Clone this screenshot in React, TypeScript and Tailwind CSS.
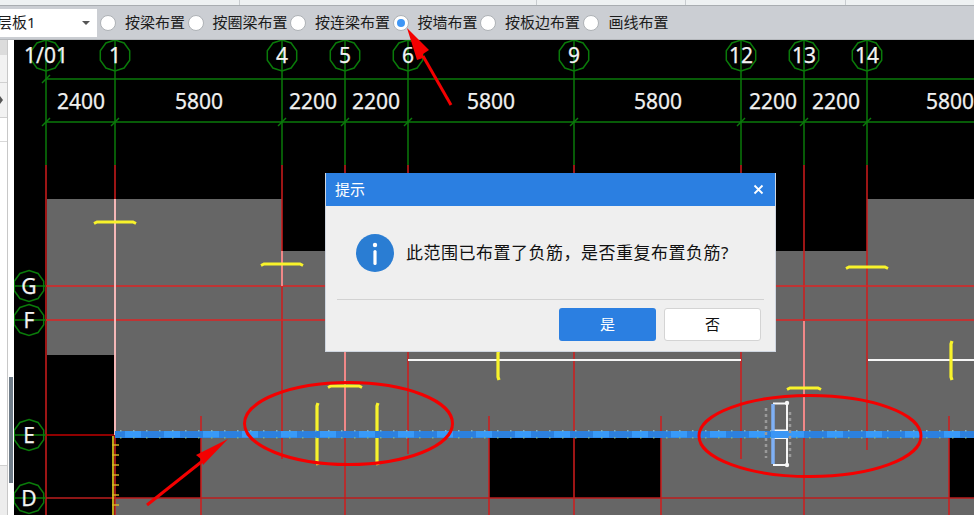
const font = { fontFamily: '"Noto Sans", "Noto Sans CJK SC", sans-serif' };

const opts = ['按梁布置', '按圈梁布置', '按连梁布置', '按墙布置', '按板边布置', '画线布置'];

const axes: [number, string][] = [
  [46, '1/01'], [115, '1'], [282, '4'], [345, '5'], [408, '6'],
  [574, '9'], [741, '12'], [804, '13'], [867, '14'],
];
const dims: [number, string][] = [
  [81, '2400'], [199, '5800'], [313, '2200'], [376, '2200'], [491, '5800'],
  [658, '5800'], [773, '2200'], [836, '2200'], [950, '5800'],
];
const rows: [number, string][] = [[286, 'G'], [320, 'F'], [435, 'E'], [498, 'D']];

function poly(cx: number, cy: number, r: number) {
  const pts: string[] = [];
  for (let i = 0; i < 10; i++) {
    const a = (i * Math.PI) / 5 - Math.PI / 2;
    pts.push(`${(cx + r * Math.cos(a)).toFixed(1)},${(cy + r * Math.sin(a)).toFixed(1)}`);
  }
  return pts.join(' ');
}

const red = '#d01c1c';
const green = '#0a7a0a';

// x, y1, y2
const redV: [number, number, number][] = [
  [46, 165, 515], [115, 165, 199], [115, 435, 515], [282, 165, 459], [345, 165, 515], [408, 165, 454],
  [574, 165, 515], [741, 165, 459], [804, 165, 515], [867, 165, 450],
  [201, 416, 515], [489, 416, 515], [661, 416, 515], [949, 416, 515],
];
const pink: [number, number, number][] = [
  [115, 199, 435], [282, 251, 286], [345, 321, 435], [804, 321, 435],
];
const yellowH: [number, number, number][] = [
  [94, 136, 222], [261, 303, 264], [328, 362, 386], [787, 821, 388], [846, 888, 267],
];
const yellowV: [number, number, number][] = [
  [317, 403, 465], [377, 403, 465], [498, 350, 380], [951, 341, 380],
];

function Drawing() {
  const ticks: number[] = [];
  for (let x = 120; x < 974; x += 13) ticks.push(x);
  const glow: number[] = [];
  for (let x = 125; x < 974; x += 39) glow.push(x);
  const ruler: number[] = [];
  for (let y = 445; y < 515; y += 10) ruler.push(y);
  return (
    <svg className="block h-full w-full" viewBox="14 40 960 475" style={font}>
      <rect x="14" y="40" width="960" height="475" fill="#000" />
      {/* slab areas */}
      <path
        d="M47 199H282V251H804V251H867V199H974V437H949V498H661V437H489V498H201V437H115V498H974V515H115V355H47Z"
        fill="#666"
      />
      {/* dimension lines */}
      <line x1="46" x2="974" y1="79" y2="79" stroke={green} strokeWidth="1.6" />
      <line x1="46" x2="974" y1="122" y2="122" stroke={green} strokeWidth="1.6" />
      {axes.map(([x, label]) => (
        <g key={label}>
          <line x1={x} x2={x} y1="40" y2="165" stroke={green} strokeWidth="1.5" />
          <line x1={x - 4} x2={x + 4} y1="126" y2="118" stroke={green} strokeWidth="1.5" />
          <polygon points={poly(x, 55.5, 15.5)} fill="none" stroke={green} strokeWidth="1.5" />
          <text x={x} y="63" fill="#f2f2f2" fontSize="21" textAnchor="middle" stroke="#f2f2f2" strokeWidth="0.25">{label}</text>
        </g>
      ))}
      <line x1="42" x2="50" y1="83" y2="75" stroke={green} strokeWidth="1.5" />
      {dims.map(([x, label], i) => (
        <text key={i} x={x} y="109" fill="#f0f0f0" fontSize="21" textAnchor="middle" stroke="#f0f0f0" strokeWidth="0.25">{label}</text>
      ))}
      {/* red grid */}
      {redV.map(([x, a, b], i) => (
        <line key={i} x1={x} x2={x} y1={a} y2={b} stroke={red} strokeWidth="1.5" />
      ))}
      <line x1="46" x2="974" y1="286" y2="286" stroke="#de2424" strokeWidth="1.6" />
      <line x1="46" x2="974" y1="320" y2="320" stroke="#de2424" strokeWidth="1.6" />
      <line x1="46" x2="115" y1="435" y2="435" stroke="#c00000" strokeWidth="1.6" />
      <line x1="46" x2="974" y1="498" y2="498" stroke="#bd1e1e" strokeWidth="1.6" />
      {pink.map(([x, a, b], i) => (
        <line key={i} x1={x} x2={x} y1={a} y2={b} stroke={i === 0 ? '#f5b8b8' : '#f08888'} strokeWidth="2" />
      ))}
      {/* row bubbles */}
      {rows.map(([y, label]) => (
        <g key={label}>
          <line x1="14" x2="46" y1={y} y2={y} stroke={green} strokeWidth="1.5" />
          <polygon points={poly(29, y, 15.5)} fill="none" stroke={green} strokeWidth="1.5" />
          <text x="29" y={y + 8} fill="#f2f2f2" fontSize="21" textAnchor="middle" stroke="#f2f2f2" strokeWidth="0.25">{label}</text>
        </g>
      ))}
      {/* white edges */}
      <line x1="408" x2="741" y1="360" y2="360" stroke="#f6f6f6" strokeWidth="2.2" />
      <line x1="868" x2="974" y1="360" y2="360" stroke="#f6f6f6" strokeWidth="2.2" />
      {/* yellow bars */}
      {yellowH.map(([a, b, y], i) => (
        <polyline key={i} points={`${a},${y + 1.5} ${a + 3},${y} ${b - 3},${y} ${b},${y + 1.5}`} fill="none" stroke="#f8f32b" strokeWidth="3" />
      ))}
      {yellowV.map(([x, a, b], i) => (
        <polyline key={i} points={`${x + 1},${a} ${x},${a + 3} ${x},${b - 3} ${x + 1},${b}`} fill="none" stroke="#f8f32b" strokeWidth="3.2" />
      ))}
      {/* ruler */}
      <line x1="113" x2="113" y1="436" y2="515" stroke="#e8d020" strokeWidth="1.6" />
      {ruler.map((y) => (
        <line key={y} x1="112" x2="119" y1={y} y2={y} stroke="#d8b820" strokeWidth="1.4" />
      ))}
      {/* blue beam */}
      <rect x="115" y="431" width="859" height="7" fill="#2c80de" />
      {glow.map((x) => (
        <rect key={x} x={x} y="431" width="16" height="6.5" fill="#389af8" />
      ))}
      {ticks.map((x) => (
        <g key={x}>
          <rect x={x} y="430" width="1.5" height="1.5" fill="#7fb4c4" />
          <rect x={x} y="437" width="1.5" height="1.5" fill="#6fae9a" />
        </g>
      ))}
      {/* opening detail */}
      <path d="M773 403.5H787V430.5H773" fill="none" stroke="#f6f6f6" strokeWidth="2" />
      <path d="M773 438H787V465H773" fill="none" stroke="#f6f6f6" strokeWidth="2" />
      <line x1="773" x2="773" y1="404" y2="431" stroke="#7fb0f5" strokeWidth="3.5" />
      <line x1="773" x2="773" y1="437" y2="464" stroke="#7fb0f5" strokeWidth="3.5" />
      <rect x="771" y="431" width="19" height="7" fill="#3a96f5" />
      <line x1="766" x2="766" y1="408" y2="458" stroke="#9a9a9a" strokeWidth="2.5" strokeDasharray="3 3" />
      <line x1="790" x2="790" y1="412" y2="458" stroke="#9a9a9a" strokeWidth="2.5" strokeDasharray="3 3" />
      <circle cx="787" cy="403" r="2.2" fill="#f6f6f6" />
      <circle cx="787" cy="465" r="2.2" fill="#f6f6f6" />
      {/* ellipses */}
      <ellipse cx="348.5" cy="423.5" rx="104" ry="41" fill="none" stroke="#f40000" strokeWidth="3" />
      <ellipse cx="810" cy="436" rx="111" ry="40.5" fill="none" stroke="#f40000" strokeWidth="3" />
    </svg>
  );
}

function Arrows() {
  return (
    <svg className="pointer-events-none absolute left-0 top-0" width="974" height="515" viewBox="0 0 974 515">
      <line x1="451" y1="105" x2="423" y2="56" stroke="#f40000" strokeWidth="3" />
      <polygon points="407,28 429,50 423,54 423,58 417,60" fill="#f40000" />
      <line x1="147" y1="505" x2="205" y2="459" stroke="#f40000" strokeWidth="3" />
      <polygon points="228,439 203,465 201,459 196,455" fill="#f40000" />
    </svg>
  );
}

function Radio({ checked }: { checked?: boolean }) {
  return (
    <span className="flex h-4 w-4 shrink-0 items-center justify-center rounded-full border border-[#aeb2b6] bg-white">
      {checked && <span className="h-2 w-2 rounded-full bg-[#3f96f5]" />}
    </span>
  );
}

export default function App() {
  return (
    <div className="relative flex h-[515px] w-[974px] flex-col overflow-hidden bg-white" style={font}>
      {/* top strip */}
      <div className="flex h-[6px] shrink-0 border-b border-[#a9adb1] bg-[#eef1f2]">
        <div className="ml-[239px] h-full w-px bg-[#c9cdd0]" />
        <div className="ml-[296px] h-full w-px bg-[#c9cdd0]" />
        <div className="ml-[148px] h-full w-px bg-[#c9cdd0]" />
        <div className="ml-[159px] h-full w-px bg-[#c9cdd0]" />
      </div>
      {/* toolbar */}
      <div className="flex h-[34px] shrink-0 items-center border-b border-[#b5b8bc] bg-[#cbced3] text-[15px] text-[#1c1c1c]">
        <div className="flex h-[28px] w-[97px] shrink-0 items-center justify-between overflow-hidden bg-white pr-[7px]">
          <span className="-ml-[3px] whitespace-nowrap text-[15px]">层板1</span>
          <span className="h-0 w-0 border-x-[4px] border-t-[4px] border-x-transparent border-t-[#555]" />
        </div>
        <div className="ml-[3px] flex items-center gap-[2.5px]">
          {opts.map((t, i) => (
            <div key={t} className="flex items-center">
              <Radio checked={i === 3} />
              <span className={i === 5 ? 'ml-[10px] whitespace-nowrap leading-none' : 'ml-[9px] whitespace-nowrap leading-none'}>{t}</span>
            </div>
          ))}
        </div>
      </div>
      {/* body */}
      <div className="flex min-h-0 flex-1">
        <aside className="flex w-[14px] shrink-0 bg-white">
          <div className="flex w-[8px] flex-col border-r border-[#c8c8c8] bg-white">
            <div className="h-[15px] bg-[#dcdcdc]" />
            <div className="h-[28px] border-b border-[#d0d0d0] bg-[#f2f2f2]" />
            <div className="flex h-[35px] items-center border-b border-[#d0d0d0] bg-[#f2f2f2]">
              <span className="h-0 w-0 border-y-[4px] border-l-[3px] border-y-transparent border-l-[#555]" />
            </div>
            <div className="h-[24px] border-b border-[#d8d8d8] bg-white" />
            <div className="flex-1 bg-white" />
            <div className="h-[50px] border-t border-[#d0d0d0] bg-[#ededed]" />
          </div>
          <div className="relative flex-1">
            <div className="absolute left-px top-[337px] h-[106px] w-[4px] bg-[#6f7c88]" />
          </div>
        </aside>
        <main className="min-w-0 flex-1">
          <Drawing />
        </main>
      </div>
      <Arrows />
      {/* dialog */}
      <div className="absolute left-[325px] top-[173px] flex h-[179px] w-[451px] flex-col border border-t-0 border-[#cfd6e0] bg-[#efefef]">
        <div className="flex h-[33px] shrink-0 items-center justify-between bg-[#2b7fe1] pl-[9px] pr-[11px] text-[15px] text-white">
          <span>提示</span>
          <svg width="11" height="11" viewBox="0 0 11 11">
            <path d="M1.5 1.5L9.5 9.5M9.5 1.5L1.5 9.5" stroke="#fff" strokeWidth="1.8" />
          </svg>
        </div>
        <div className="flex h-[93px] shrink-0 items-start pl-[30px] pt-[28px]">
          <svg width="38" height="38" viewBox="0 0 38 38" className="shrink-0">
            <circle cx="19" cy="19" r="19" fill="#2a7dd3" />
            <circle cx="19" cy="11" r="2.2" fill="#fff" />
            <rect x="17.4" y="16" width="3.2" height="15" rx="1.6" fill="#fff" />
          </svg>
          <span className="ml-[12px] mt-[7px] whitespace-nowrap text-[17px] leading-[24px] tracking-[0.5px] text-[#111]">
            此范围已布置了负筋，是否重复布置负筋?
          </span>
        </div>
        <div className="mx-[11px] h-px shrink-0 bg-[#d2d2d2]" />
        <div className="flex justify-end gap-2 pr-[14px] pt-2 text-[15px]">
          <button className="h-[33px] w-[97px] rounded-[3px] bg-[#2b7fe1] text-white">是</button>
          <button className="h-[33px] w-[97px] rounded-[3px] border border-[#d4d4d4] bg-white text-[#111]">否</button>
        </div>
      </div>
    </div>
  );
}
